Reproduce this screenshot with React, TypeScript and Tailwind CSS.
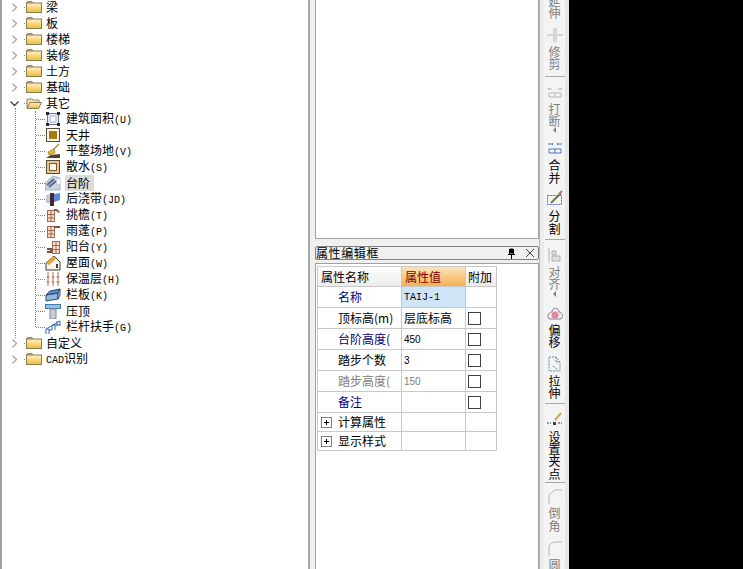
import type { ReactNode } from "react"

const CJK = { fontFamily: '"Noto Sans CJK SC", "Noto Sans", sans-serif' }

// latin bits in this old UI are half the width of a hanzi
function Latin({ children }: { children: ReactNode }) {
    return <span className="font-['Liberation_Mono'] text-[10px]">{children}</span>
}

function Chevron({ open }: { open?: boolean }) {
    return (
        <svg width="9" height="9" viewBox="0 0 9 9" fill="none" stroke={open ? "#404040" : "#a6a6a6"} strokeWidth="1.3">
            {open ? <path d="M0.5 2.5 L4.5 6.5 L8.5 2.5" /> : <path d="M2.5 0.5 L6.5 4.5 L2.5 8.5" />}
        </svg>
    )
}

function Folder({ open }: { open?: boolean }) {
    return (
        <svg width="16" height="14" viewBox="0 0 16 14">
            <defs>
                <linearGradient id="fld" x1="0" y1="0" x2="0" y2="1">
                    <stop offset="0" stopColor="#fff3c4" />
                    <stop offset="1" stopColor="#f0b93c" />
                </linearGradient>
            </defs>
            {open ? (
                <>
                    <path d="M1 12 V3 H6 L7 4 H13 V6" fill="#f6e3a8" stroke="#8a8a7a" />
                    <path d="M1 12.5 L4 6.5 H15.5 L12.5 12.5 Z" fill="url(#fld)" stroke="#8a7a50" />
                </>
            ) : (
                <>
                    <path d="M0.5 3 L1.5 1.5 H6 L7 3 Z" fill="#f8e7b0" stroke="#8a8a7a" />
                    <rect x="0.5" y="3" width="15" height="9.5" fill="url(#fld)" stroke="#8a7a50" />
                </>
            )}
        </svg>
    )
}

const icons: Record<string, ReactNode> = {
    area: (
        <>
            <rect x="2.5" y="2.5" width="11" height="11" fill="#e8eef6" stroke="#6a7890" />
            <rect x="5" y="5" width="6" height="6" fill="#fff" stroke="#a8b4c8" />
            <path d="M1 1h3v3H1zM12 1h3v3h-3zM1 12h3v3H1zM12 12h3v3h-3z" fill="#202840" />
        </>
    ),
    well: (
        <>
            <rect x="1.5" y="1.5" width="13" height="13" fill="#fbf6e8" stroke="#5a4a38" />
            <rect x="4" y="4" width="8" height="8" fill="#a87a10" />
        </>
    ),
    level: (
        <>
            <path d="M8 7 L14 1" stroke="#a89040" strokeWidth="1.5" />
            <path d="M3 9 L9 6 L10 10 L4 12 Z" fill="#e8b818" stroke="#705010" strokeWidth="0.5" />
            <path d="M1 15 L6 12 L15 11 V15 Z" fill="#5a3a28" />
        </>
    ),
    apron: (
        <>
            <rect x="1.5" y="1.5" width="13" height="13" fill="#e8c890" stroke="#5a4a38" />
            <rect x="4.5" y="4.5" width="7" height="7" fill="#fbf6e8" stroke="#7a5a38" />
        </>
    ),
    step: (
        <>
            <path d="M0 8 L8 1 L15 3 V15 H0 Z" fill="#c8d4e4" stroke="#8898b0" strokeWidth="0.7" />
            <path d="M2 10 L9 4 M4 12 L11 6" stroke="#58688a" strokeWidth="2" />
            <path d="M12 4 H15 V9 H12 Z" fill="#f4f6fa" />
        </>
    ),
    band: (
        <>
            <path d="M1 4 L5 3 V12 H1 Z" fill="#b8c8e8" />
            <rect x="5" y="2" width="4" height="13" fill="#4a2a20" />
            <path d="M9 3 L15 2 V9 L9 11 Z" fill="#5a8ae0" />
        </>
    ),
    eave: (
        <>
            <rect x="2.5" y="3.5" width="7" height="11" fill="#f8dcc8" stroke="#a06a50" />
            <path d="M2.5 7.5h7M2.5 11h7M6 3.5v11" stroke="#a06a50" />
            <path d="M9 2 H12 L15 5 L14 6 L11 4 H9 Z" fill="#8a5a48" />
        </>
    ),
    canopy: (
        <>
            <rect x="2.5" y="3.5" width="7" height="11" fill="#f8dcc8" stroke="#a06a50" />
            <path d="M2.5 7.5h7M2.5 11h7M6 3.5v11" stroke="#a06a50" />
            <path d="M9 3 H15 V5 H9 Z" fill="#7a5040" />
        </>
    ),
    balcony: (
        <>
            <rect x="7.5" y="2.5" width="7" height="12" fill="#f8dcc8" stroke="#a06a50" />
            <path d="M7.5 6.5h7M7.5 10.5h7M11 2.5v12" stroke="#a06a50" />
            <path d="M2 9 H7 V14 H2 V12 H5 V11 H2 Z" fill="#7a5040" />
        </>
    ),
    roof: (
        <>
            <path d="M1 15 V8 L9 1 L15 7 V15 Z" fill="#fbf6e8" stroke="#3a3a3a" />
            <path d="M1 8 L8 1 L11 4 L4 10 Z" fill="#e8a030" />
            <rect x="11" y="9" width="2" height="4" fill="#404040" />
        </>
    ),
    insulation: (
        <path d="M3 1v14M8 1v14M13 1v14M1.5 6h3M6.5 6h3M11.5 6h3M1.5 11h3M6.5 11h3M11.5 11h3" stroke="#b06a50" fill="none" />
    ),
    board: (
        <>
            <path d="M1 8 L13 6 V12 L1 14 Z" fill="#90b8e0" stroke="#2a4a78" />
            <path d="M1 8 L5 4 L15 2 L13 6 Z" fill="#5a88c0" stroke="#2a4a78" />
            <path d="M13 6 L15 2 V8 L13 12 Z" fill="#c8dcf0" stroke="#2a4a78" />
        </>
    ),
    coping: (
        <>
            <rect x="0.5" y="1.5" width="15" height="4" fill="#90c0e8" stroke="#4878a8" />
            <rect x="5" y="6" width="6" height="10" fill="#c8ccd4" stroke="#8088a0" />
        </>
    ),
    rail: (
        <path d="M1 15v-5h3v5M7 11V6h3v5M12 7V2M1 10l14-8M15 2v5M4 11h3M9 6h6" fill="none" stroke="#3868b8" />
    ),
}

const roots: { name: ReactNode; open?: boolean }[] = [
    { name: "梁" },
    { name: "板" },
    { name: "楼梯" },
    { name: "装修" },
    { name: "土方" },
    { name: "基础" },
    { name: "其它", open: true },
]

const children: { icon: string; name: string; key?: string; sel?: boolean }[] = [
    { icon: "area", name: "建筑面积", key: "(U)" },
    { icon: "well", name: "天井" },
    { icon: "level", name: "平整场地", key: "(V)" },
    { icon: "apron", name: "散水", key: "(S)" },
    { icon: "step", name: "台阶", sel: true },
    { icon: "band", name: "后浇带", key: "(JD)" },
    { icon: "eave", name: "挑檐", key: "(T)" },
    { icon: "canopy", name: "雨蓬", key: "(P)" },
    { icon: "balcony", name: "阳台", key: "(Y)" },
    { icon: "roof", name: "屋面", key: "(W)" },
    { icon: "insulation", name: "保温层", key: "(H)" },
    { icon: "board", name: "栏板", key: "(K)" },
    { icon: "coping", name: "压顶" },
    { icon: "rail", name: "栏杆扶手", key: "(G)" },
]

function RootRow({ name, open }: { name: ReactNode; open?: boolean }) {
    return (
        <div className="relative flex h-4 items-center">
            <span className="absolute left-[22px] top-2 w-[3px] border-t border-dotted border-[#808080]" />
            <span className="flex w-[24px] justify-end pr-[7px]">
                <Chevron open={open} />
            </span>
            <Folder open={open} />
            <span className="ml-1 text-[12px] leading-4 text-black">{name}</span>
        </div>
    )
}

function ChildRow({ icon, name, keyText, sel, last }: { icon: string; name: string; keyText?: string; sel?: boolean; last?: boolean }) {
    return (
        <div className="relative flex h-4 items-center pl-[43px]">
            <span className={`absolute left-[33px] top-0 border-l border-dotted border-[#808080] ${last ? "h-2" : "h-4"}`} />
            <span className="absolute left-[34px] top-2 w-[9px] border-t border-dotted border-[#808080]" />
            <svg width="16" height="16" viewBox="0 0 16 16" className="shrink-0">
                {icons[icon]}
            </svg>
            <span className={`ml-1 pl-px text-[12px] leading-4 text-black ${sel ? "bg-[#dcdcdc] pr-[4px]" : ""}`}>
                {name}
                {keyText && <Latin>{keyText}</Latin>}
            </span>
        </div>
    )
}

function Tree() {
    return (
        <div className="relative -mt-px">
            <span className="absolute left-[13px] top-[109px] h-[230px] border-l border-dotted border-[#808080]" />
            {roots.map((r, i) => (
                <RootRow key={i} name={r.name} open={r.open} />
            ))}
            {children.map((c, i) => (
                <ChildRow key={c.name} icon={c.icon} name={c.name} keyText={c.key} sel={c.sel} last={i === children.length - 1} />
            ))}
            <RootRow name="自定义" />
            <RootRow name={<><Latin>CAD</Latin>识别</>} />
        </div>
    )
}

function Check() {
    return <span className="block h-[13px] w-[13px] border border-[#404040] bg-white" />
}

function Plus() {
    return (
        <span className="relative mr-[6px] block h-[11px] w-[11px] border border-[#808080] bg-white">
            <span className="absolute left-[2px] top-[4px] h-px w-[5px] bg-black" />
            <span className="absolute left-[4px] top-[2px] h-[5px] w-px bg-black" />
        </span>
    )
}

const grid = "border-b border-r border-[#c8c8c8]"
const rowCols = "grid grid-cols-[84px_64px_31px]"

function PropRow({ label, value, color = "text-[#000080]", check = true, tint, num, mono }: {
    label: string
    value?: string
    color?: string
    check?: boolean
    tint?: string
    num?: boolean
    mono?: boolean
}) {
    const gray = color === "text-[#808080]"
    return (
        <div className={`${rowCols} h-[21px]`}>
            <div className={`${grid} flex items-center overflow-hidden whitespace-nowrap pl-5 text-[12px] ${color}`}>{label}</div>
            <div className={`${grid} flex items-center pl-[2px] text-[12px] ${tint ?? ""} ${gray ? "text-[#808080]" : "text-black"}`}>
                {mono ? <Latin>{value}</Latin> : num ? <span className="font-['Liberation_Sans'] text-[10px]">{value}</span> : value}
            </div>
            <div className={`${grid} flex items-center pl-[2px]`}>{check && <Check />}</div>
        </div>
    )
}

function GroupRow({ label }: { label: string }) {
    return (
        <div className={`${rowCols} h-[19px]`}>
            <div className={`${grid} flex items-center pl-[3px] text-[12px] text-black`}>
                <Plus />
                {label}
            </div>
            <div className={grid} />
            <div className={grid} />
        </div>
    )
}

function PropertyPanel() {
    return (
        <div className="flex min-h-0 flex-1 flex-col">
            <div className="mt-[7px] flex h-[14px] items-center justify-between rounded-[2px] border border-[#808080] bg-[#f0f0f0] text-[12px] tracking-[0.6px] text-black">
                <span>属性编辑框</span>
                <span className="flex items-center gap-[9px] pr-[3px]">
                    <svg width="9" height="11" viewBox="0 0 9 11" fill="none" stroke="#000">
                        <path d="M2.5 1v5M6.5 1v5M1 6.5h7" />
                        <path d="M4.5 7v4M3 1h3v4H3z" fill="#000" strokeWidth="1" />
                    </svg>
                    <svg width="10" height="10" viewBox="0 0 10 10" stroke="#404040">
                        <path d="M1 1l8 8M9 1l-8 8" />
                    </svg>
                </span>
            </div>
            <div className="mt-[3px] flex-1 border border-b-0 border-[#a0a0a0] bg-white pl-px pt-[2px]">
                <div className="w-[180px] border-l border-t border-[#c8c8c8]">
                    <div className={`${rowCols} h-[20px]`}>
                        <div className={`${grid} flex items-center bg-gradient-to-b from-white to-[#ececec] pl-[3px] text-[12px] text-black`}>属性名称</div>
                        <div className={`${grid} flex items-center bg-gradient-to-b from-[#fbe3b8] to-[#f5b04f] pl-[3px] text-[12px] text-[#800000]`}>属性值</div>
                        <div className={`${grid} flex items-center bg-gradient-to-b from-white to-[#ececec] pl-[2px] text-[12px] text-black`}>附加</div>
                    </div>
                    <PropRow label="名称" value="TAIJ-1" check={false} tint="bg-[#cfe5f7]" mono />
                    <PropRow label="顶标高(m)" value="层底标高" color="text-black" />
                    <PropRow label="台阶高度(" value="450" num />
                    <PropRow label="踏步个数" value="3" color="text-black" num />
                    <PropRow label="踏步高度(" value="150" color="text-[#808080]" num />
                    <PropRow label="备注" value="" />
                    <GroupRow label="计算属性" />
                    <GroupRow label="显示样式" />
                </div>
            </div>
        </div>
    )
}

type ToolProps = { label: string; icon?: ReactNode; dim?: boolean; arrow?: boolean; sep?: string; pt: string }

function ToolItem({ label, icon, dim, arrow, sep, pt }: ToolProps) {
    return (
        <div className={`flex flex-col items-center ${pt}`}>
            {icon && (
                <svg width="18" height="18" viewBox="0 0 18 18" fill="none" className="mb-[2px] shrink-0">
                    {icon}
                </svg>
            )}
            <div className={`w-3 text-[12px] leading-[12.4px] ${dim ? "text-[#808080]" : "text-black"}`}>{label}</div>
            {arrow && <span className="h-0 w-0 border-y-[3px] border-r-[3px] border-y-transparent border-r-[#808080]" />}
            {sep && <div className={`${sep} h-px w-[20px] bg-[#a8a8a8]`} />}
        </div>
    )
}

function Toolbar() {
    return (
        <div className="flex w-[29px] shrink-0 flex-col overflow-hidden border-l-[4px] border-r-[4px] border-l-[#ececec] border-r-[#e6e6e6] bg-[#f4f4f4]">
            <div className="-mt-[5px] flex flex-col">
                <ToolItem pt="" dim label="延伸" />
                <ToolItem
                    pt="pt-[6px]"
                    dim
                    label="修剪"
                    sep="mt-[5px]"
                    icon={<path d="M1 9h6M11 9h6M8 2v14M10 2v14" stroke="#b8b8b8" />}
                />
                <ToolItem
                    pt="pt-[6px]"
                    dim
                    arrow
                    label="打断"
                    icon={<path d="M2 6h4M12 6h4M3 5l-1 1 1 1M15 5l1 1-1 1M3 10h12v4H3zM9 10v4" stroke="#b8b8b8" />}
                />
                <ToolItem
                    pt="pt-[6px]"
                    label="合并"
                    icon={<path d="M2 5h5M11 5h5M6 4l1 1-1 1M12 4l-1 1 1 1M3 10h12v4H3zM9 10v4" stroke="#4a78b8" />}
                />
                <ToolItem
                    pt="pt-[6px]"
                    label="分割"
                    sep="mt-[4px]"
                    icon={
                        <>
                            <rect x="1.5" y="5.5" width="14" height="9" stroke="#5a68c0" strokeDasharray="2 1" />
                            <path d="M5 13 L15 3" stroke="#6a7a50" strokeWidth="2" />
                            <path d="M13 4 L16 1" stroke="#d06a70" strokeWidth="2" />
                        </>
                    }
                />
                <ToolItem
                    pt="pt-[6px]"
                    dim
                    arrow
                    label="对齐"
                    icon={<path d="M3 2v14M6 5h4v4H6zM6 10h8v5H6z" stroke="#b0b0b0" fill="#e0e0e0" />}
                />
                <ToolItem
                    pt="pt-[7px]"
                    label="偏移"
                    icon={
                        <>
                            <path d="M3 15 C0 11 4 8 6 8 C6 3 13 3 13 8 C16 8 18 12 15 15 Z" stroke="#8a7a90" fill="#f4eef4" />
                            <circle cx="9" cy="11" r="3.5" fill="#e0889a" />
                        </>
                    }
                />
                <ToolItem
                    pt="pt-[6px]"
                    label="拉伸"
                    sep="mt-[3px]"
                    icon={<path d="M3 2h7l4 5v9H3zM10 2v5h4M7 11l5 4" stroke="#6a88a8" strokeDasharray="2 1" />}
                />
                <ToolItem
                    pt="pt-[7px]"
                    label="设置夹点"
                    sep="mt-[2px]"
                    icon={
                        <>
                            <path d="M9 9 L15 2" stroke="#c8a860" strokeWidth="2" />
                            <path d="M1 12h4M12 12h4" stroke="#404040" strokeDasharray="2 1" />
                            <rect x="7" y="11" width="3" height="3" fill="#404040" />
                        </>
                    }
                />
                <ToolItem pt="pt-[4px]" dim label="倒角" icon={<path d="M3 17V8L9 3h7" stroke="#b8b8b8" />} />
                <ToolItem pt="pt-[7px]" dim label="圆角" icon={<path d="M3 17V9Q3 3 10 3h6" stroke="#b8b8b8" />} />
            </div>
        </div>
    )
}

export default function App() {
    return (
        <div className="flex h-[569px] w-[743px] overflow-hidden bg-black" style={CJK}>
            <div className="w-[2px] shrink-0 bg-[#a0a0a0]" />
            <div className="w-[306px] shrink-0 overflow-hidden bg-white">
                <Tree />
            </div>
            <div className="w-[2px] shrink-0 bg-[#a8a8a8]" />
            <div className="flex w-[229px] shrink-0 flex-col bg-[#f0f0f0] pl-[5px]">
                <div className="h-[239px] shrink-0 border-b border-l border-r border-[#a0a0a0] bg-white" />
                <PropertyPanel />
            </div>
            <div className="w-px shrink-0 bg-[#b4b4b4]" />
            <Toolbar />
            <div className="flex-1 bg-black" />
        </div>
    )
}
